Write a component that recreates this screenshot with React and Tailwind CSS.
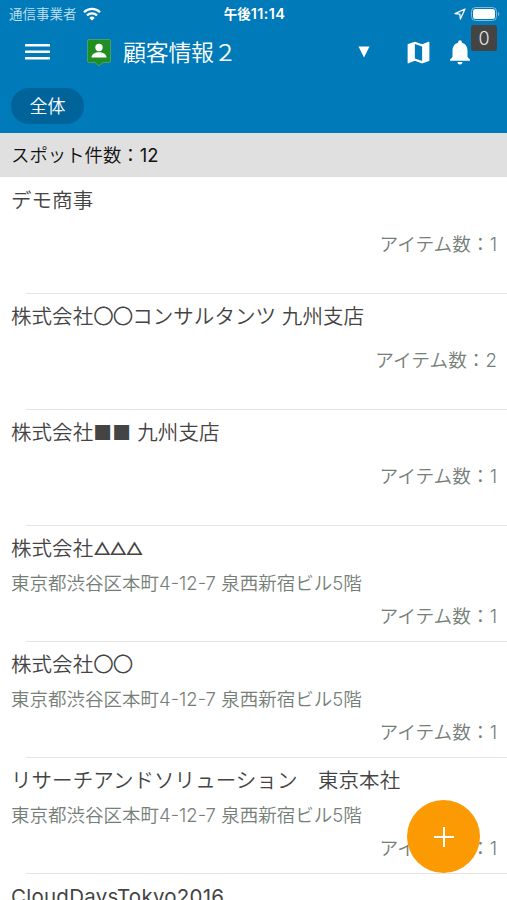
import { MdMap, MdNotifications } from 'react-icons/md'

const ADDRESS = '東京都渋谷区本町4-12-7 泉西新宿ビル5階'

const SPOTS = [
  { id: 1, name: 'デモ商事', items: 1 },
  { id: 2, name: '株式会社', mark: 'circle', rest: 'コンサルタンツ 九州支店', items: 2 },
  { id: 3, name: '株式会社', mark: 'square', rest: ' 九州支店', items: 1 },
  { id: 4, name: '株式会社', mark: 'triangle', address: ADDRESS, items: 1 },
  { id: 5, name: '株式会社', mark: 'circle', address: ADDRESS, items: 1 },
  { id: 6, name: 'リサーチアンドソリューション　東京本社', address: ADDRESS, items: 1 },
  { id: 7, name: 'CloudDaysTokyo2016', latin: true }
]

const MARKS = {
  circle: <span className="tracking-[-1px]">〇〇</span>,
  square: <span className="tracking-[0.4px]">■■</span>,
  triangle: <span className="relative -top-px text-[17.5px] font-medium tracking-[-2px]">△△△</span>
}

const StatusBar = () => (
  <div className="flex h-7 items-center text-[13.5px] leading-7">
    <div className="flex flex-1 items-center gap-1.5 pl-[9px]">
      <span className="text-[#c3e0f0]">通信事業者</span>
      <svg viewBox="0 0 18 14" className="h-3.5 w-[18px]" fill="none" stroke="white" strokeWidth="2.3">
        <path d="M1 5.2a11.4 11.4 0 0 1 16 0" />
        <path d="M4 8.4a7.1 7.1 0 0 1 10 0" />
        <path d="M9 13.6 6.3 10.9a3.9 3.9 0 0 1 5.4 0z" fill="white" stroke="none" />
      </svg>
    </div>
    <span className="text-[13.5px] font-bold">
      午後<span className="text-[14.5px] font-semibold tracking-[0.4px]">11:14</span>
    </span>
    <div className="flex flex-1 items-center justify-end gap-[5px] pr-[7px]">
      <svg viewBox="0 0 12 12" className="size-3" fill="none" stroke="white" strokeWidth="1.3" strokeLinejoin="round">
        <path d="M11 1 1 5.6l4.8.6.6 4.8z" />
      </svg>
      <svg viewBox="0 0 29 14" className="h-3.5 w-[29px]">
        <rect x="0.5" y="0.5" width="25" height="13" rx="4" fill="none" stroke="#7fbcdb" />
        <rect x="2" y="2" width="22" height="10" rx="2.5" fill="white" />
        <path d="M27 5c1.7.5 1.7 3.5 0 4z" fill="#7fbcdb" />
      </svg>
    </div>
  </div>
)

const Header = () => (
  <header className="h-[133px] shrink-0 bg-[#007ab8] text-white">
    <StatusBar />
    <div className="relative flex h-12 items-center pl-[25px]">
      <svg viewBox="0 0 25 16" className="h-4 w-[25px]" fill="white">
        <rect y="0" width="25" height="2.6" rx="0.6" />
        <rect y="6.5" width="25" height="2.6" rx="0.6" />
        <rect y="13" width="25" height="2.6" rx="0.6" />
      </svg>
      <svg viewBox="0 0 24 28" className="ml-[37px] mt-0.5 h-7 w-6">
        <path
          d="M2 .5h20q1.5 0 1.5 1.5v20q0 1.5-1.5 1.5h-6L12 27l-4-3.5H2Q.5 23.5.5 22V2Q.5.5 2 .5z"
          fill="#1f8f24"
          stroke="#4d9c70"
        />
        <circle cx="12" cy="8.5" r="3.7" fill="white" />
        <path d="M4.5 18.5c0-3.5 4-5.2 7.5-5.2s7.5 1.7 7.5 5.2z" fill="white" />
      </svg>
      <h1 className="ml-3 mt-0.5 flex-1 text-[23px] leading-8 tracking-[-0.3px]">顧客情報２</h1>
      <svg viewBox="0 0 12 12" className="mr-[34px] size-3" fill="white">
        <path d="M.5.5h11L6 11.5z" />
      </svg>
      <MdMap className="mr-3 size-[29px]" />
      <MdNotifications className="mr-8 size-[30px]" />
      <span className="absolute right-2.5 top-[-3px] flex h-[26px] w-[26px] items-center justify-center rounded-[3px] bg-[#444] text-[18px] text-[#e8e8e8]">
        0
      </span>
    </div>
    <div className="pl-[11px] pt-3">
      <button className="block h-9 w-[73px] rounded-full bg-[#00639a] text-[18px] leading-[37px]">全体</button>
    </div>
  </header>
)

const SpotRow = ({ spot }) => (
  <li className="h-[116px] shrink-0">
    <div className="h-[115px] pl-[11px] pr-2.5 pt-[9px]">
      <div
        className={`h-7 whitespace-pre text-[20.5px] leading-7 text-[#444] ${spot.latin ? 'font-normal tracking-[0.25px]' : 'tracking-[0.05px]'}`}
      >
        {spot.name}
        {spot.mark && MARKS[spot.mark]}
        {spot.rest}
      </div>
      {spot.address && (
        <div className="mt-2 h-6 whitespace-pre text-[18.5px] leading-6 text-[#757e77]">{spot.address}</div>
      )}
      {spot.items && (
        <div
          className={`${spot.address ? 'mt-2.5' : 'mt-[18px]'} h-6 text-right text-[18.7px] leading-6 text-[#757e77]`}
        >
          アイテム数：{spot.items}
        </div>
      )}
    </div>
    <div className="ml-[26px] h-px bg-[#e4e4e4]" />
  </li>
)

export default function App() {
  return (
    <div
      lang="ja"
      className="relative flex h-[900px] w-[507px] flex-col overflow-hidden bg-white font-['Inter','Noto_Sans_CJK_JP',sans-serif] font-[350]"
    >
      <Header />
      <div className="h-11 shrink-0 bg-[#e0e0e0] pl-[11px] text-[18.4px] leading-[44px] text-[#111]">
        スポット件数：<span className="font-normal">12</span>
      </div>
      <ul className="flex flex-col pt-px">
        {SPOTS.map((spot) => (
          <SpotRow key={spot.id} spot={spot} />
        ))}
      </ul>
      <button className="absolute left-[407px] top-[800px] flex size-[73px] items-center justify-center rounded-full bg-[#fc9a04]">
        <svg viewBox="0 0 20 20" className="size-5" stroke="white" strokeWidth="2">
          <path d="M10 0v20M0 10h20" />
        </svg>
      </button>
    </div>
  )
}
